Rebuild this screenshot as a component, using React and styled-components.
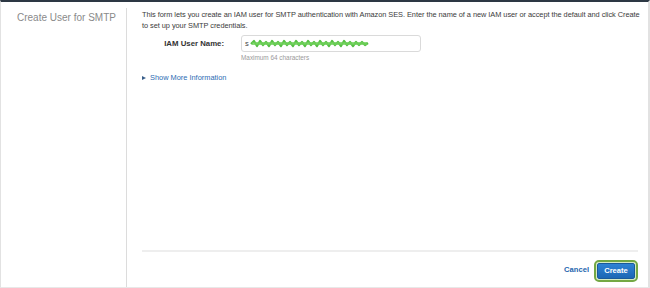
import React from 'react'
import styled, { createGlobalStyle } from 'styled-components';

const GlobalStyle = createGlobalStyle`
body{
    margin: 0;
    background: #fff;
    font-family: "Liberation Sans", Arial, Helvetica, sans-serif;
}
`;

const Frame = styled.div`
display: flex;
width: 650px;
height: 288px;
box-sizing: border-box;
border-top: 2px solid #2d3844;
border-left: 1px solid #e2e2e2;
border-right: 2px solid #e2e2e2;
border-bottom: 1px solid #e8e8e8;
`;

const Sidebar = styled.div`
width: 126px;
margin-top: 6px;
padding: 4px 0 0 16px;
box-sizing: border-box;
border-right: 1px solid #dcdcdc;
flex-shrink: 0;
h2{
    margin: 0;
    font-size: 10px;
    line-height: 12px;
    font-weight: 400;
    color: #8a8a8a;
    white-space: nowrap;
}
`;

const Main = styled.div`
flex: 1;
display: flex;
flex-direction: column;
padding: 0 10px 0 15px;
`;

const Intro = styled.p`
margin: 7px -2px 0 0;
font-size: 7.4px;
letter-spacing: -0.05px;
line-height: 11px;
color: #3a3a3a;
`;

const FormRow = styled.div`
display: grid;
grid-template-columns: 82px 180px;
column-gap: 17px;
align-items: center;
margin-top: 4px;
label{
    text-align: right;
    font-size: 7.8px;
    font-weight: 700;
    color: #333;
}
`;

const Field = styled.div`
height: 17px;
box-sizing: border-box;
border: 1px solid #dadada;
border-radius: 3px;
display: flex;
align-items: center;
padding-left: 3px;
gap: 1px;
font-size: 7.5px;
color: #444;
`;

const Hint = styled.div`
margin: 2px 0 0 99px;
font-size: 6.4px;
color: #9a9a9a;
`;

const MoreLink = styled.a`
display: flex;
align-items: center;
gap: 4px;
margin-top: 12px;
font-size: 7.4px;
color: #2b6cb3;
cursor: pointer;
&::before{
    content: '';
    border-left: 4px solid #3a5f8a;
    border-top: 2.5px solid transparent;
    border-bottom: 2.5px solid transparent;
}
`;

const Spacer = styled.div`
flex: 1;
`;

const Footer = styled.div`
border-top: 2px solid #eeeeee;
height: 35px;
display: flex;
justify-content: flex-end;
align-items: center;
gap: 8px;
padding-right: 3px;
`;

const Cancel = styled.a`
font-size: 7.6px;
font-weight: 700;
color: #2566ae;
cursor: pointer;
`;

const CreateButton = styled.button`
height: 16px;
width: 38px;
padding: 0;
margin-top: 2px;
border: 1px solid #1a5a9a;
border-radius: 2px;
background: linear-gradient(#2f82d4, #1c67b5);
color: #fff;
font-family: inherit;
font-size: 7.6px;
font-weight: 700;
outline: 2px solid #74a844;
outline-offset: 1px;
box-shadow: 0 0 0 1px #d6ebc4;
`;

function Scribble() {
    return (
        <svg width="120" height="9" viewBox="0 0 120 9" style={{ filter: 'blur(0.5px)' }}>
            <path d="M1 5 L4 2 L7 7 L10 2 L13 6 L16 3 L19 7 L22 2 L25 6 L28 3 L31 7 L34 2 L37 6 L40 3 L43 7 L46 2 L49 6 L52 3 L55 7 L58 2 L61 6 L64 3 L67 7 L70 2 L73 6 L76 3 L79 7 L82 2 L85 6 L88 3 L91 7 L94 2 L97 6 L100 3 L103 7 L106 3 L109 6 L112 3 L115 6 L118 4"
                fill="none" stroke="#55bf44" strokeWidth="2.2" strokeLinejoin="round" />
            <rect x="2" y="3" width="115" height="3" fill="#6fd15a" opacity="0.8" />
        </svg>
    )
}

function App() {
    return (
        <>
            <GlobalStyle />
            <Frame>
                <Sidebar><h2>Create User for SMTP</h2></Sidebar>
                <Main>
                    <Intro>This form lets you create an IAM user for SMTP authentication with Amazon SES. Enter the name of a new IAM user or accept the default and click Create to set up your SMTP credentials.</Intro>
                    <FormRow>
                        <label>IAM User Name:</label>
                        <Field><span>s</span><Scribble /></Field>
                    </FormRow>
                    <Hint>Maximum 64 characters</Hint>
                    <MoreLink>Show More Information</MoreLink>
                    <Spacer />
                    <Footer>
                        <Cancel>Cancel</Cancel>
                        <CreateButton>Create</CreateButton>
                    </Footer>
                </Main>
            </Frame>
        </>
    )
}

export default App;
